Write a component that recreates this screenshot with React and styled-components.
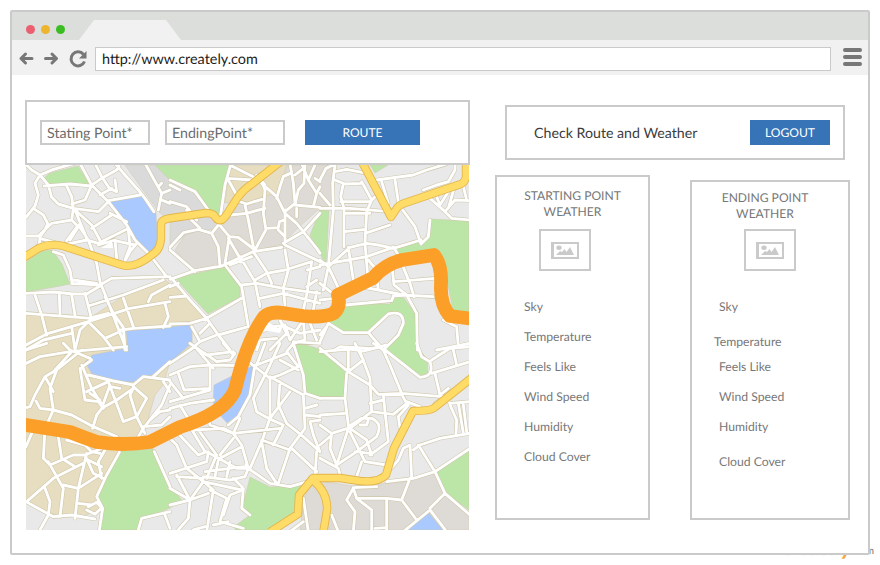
import React from "react";
import styled, { createGlobalStyle } from "styled-components";

const GlobalStyle = createGlobalStyle`
  * { box-sizing: border-box; }
  html, body { margin: 0; background: #fff; }
  body {
    font-family: Lato, "Open Sans", sans-serif;
    text-rendering: geometricPrecision;
    overflow: hidden;
  }
`;

const Page = styled.main`
  position: relative;
  width: 880px;
  height: 565px;
  padding: 10px;
  background: #fff;
`;

const Brand = styled.div`
  position: absolute;
  left: 783px;
  top: 531px;
  display: flex;
  align-items: baseline;
  font-size: 20px;
  line-height: 30px;
  font-weight: 700;
  letter-spacing: -0.4px;
  color: #b9d3ea;
`;

const BrandAccent = styled.span`
  color: #f7a540;
  font-size: 23px;
  font-style: italic;
`;

const BrandSuffix = styled.small`
  position: absolute;
  left: 70px;
  top: 10px;
  font-size: 10px;
  line-height: 20px;
  letter-spacing: 0;
  font-weight: 400;
  color: #777;
`;

const Browser = styled.div`
  position: relative;
  width: 860px;
  height: 545px;
  border: 2px solid #cacaca;
  border-radius: 2px;
  background: #fff;
`;

const TabStrip = styled.header`
  display: flex;
  height: 28px;
  padding: 8px 0 0 13.5px;
  background: #dcdedb;
`;

const Dots = styled.div`
  display: flex;
  gap: 6px;
  padding-top: 5px;
  width: 53.5px;
`;

const Dot = styled.i`
  width: 9px;
  height: 9px;
  border-radius: 50%;
  background: ${(p) => p.$color};
`;

const Tab = styled.div`
  width: 102px;
  height: 20px;
  background: #f1f1f1;
  clip-path: polygon(15px 0, 87px 0, 102px 100%, 0 100%);
`;

const Toolbar = styled.nav`
  display: flex;
  align-items: flex-start;
  height: 35px;
  background: #f1f1f1;
`;

const NavIcons = styled.svg`
  flex: none;
  width: 83px;
  height: 35px;
`;

const Address = styled.div`
  width: 736px;
  height: 24px;
  margin-top: 7px;
  padding-left: 6px;
  border: 1px solid #cacaca;
  background: #fff;
  font-size: 14.4px;
  line-height: 24px;
  color: #1c1c1c;
`;

const Menu = styled.div`
  display: grid;
  gap: 3px;
  margin: 8px 0 0 12px;
`;

const MenuBar = styled.i`
  width: 19px;
  height: 4px;
  border-radius: 2px;
  background: #777;
`;

const Content = styled.div`
  display: flex;
  align-items: flex-start;
  gap: 25px;
  padding: 25px 0 0 13px;
`;

const RoutePanel = styled.section`
  width: 445px;
`;

const SearchForm = styled.div`
  display: flex;
  gap: 15px;
  height: 65px;
  padding: 18px 13px;
  border: 2px solid #cacaca;
`;

const Field = styled.div`
  width: ${(p) => p.$width}px;
  height: 25px;
  padding-left: 5px;
  border: 2px solid #cacaca;
  font-size: 14.2px;
  line-height: 24px;
  color: #6c6c6c;
`;

const Button = styled.button`
  width: ${(p) => p.$width}px;
  height: 25px;
  margin-left: ${(p) => p.$gap || 0}px;
  padding: 0;
  border: 0;
  background: #3673b7;
  color: #fff;
  font: 12.1px/24px Lato, sans-serif;
  text-rendering: geometricPrecision;
`;

const Map = styled.svg`
  display: block;
  width: 443px;
  height: 365px;
  margin-left: 1px;
`;

const WeatherPanel = styled.section`
  width: 355px;
  padding-top: 5px;
`;

const TitleBar = styled.div`
  display: flex;
  align-items: center;
  justify-content: space-between;
  width: 340px;
  height: 55px;
  margin-left: 10px;
  padding: 0 13px 0 27px;
  border: 2px solid #cacaca;
`;

const Title = styled.h1`
  margin: 2px 0 0;
  font-size: 14.2px;
  line-height: 20px;
  font-weight: 400;
  color: #3c3c3c;
`;

const Cards = styled.div`
  display: flex;
  align-items: flex-end;
  gap: 40px;
  margin-top: 15px;
`;

const Card = styled.article`
  width: ${(p) => p.$width}px;
  height: ${(p) => p.$height}px;
  padding-top: ${(p) => p.$top}px;
  border: 2px solid #cacaca;
  color: #777;
`;

const CardTitle = styled.h2`
  width: 130px;
  height: ${(p) => p.$height}px;
  margin: 0 0 0 ${(p) => p.$left}px;
  text-align: center;
  font-size: 12.1px;
  line-height: 16px;
  font-weight: 400;
`;

const Thumb = styled.div`
  display: flex;
  align-items: center;
  justify-content: center;
  width: 52px;
  height: 42px;
  margin: 0 0 28px ${(p) => p.$left}px;
  border: 2px solid #cacaca;
`;

const Reading = styled.div`
  height: ${(p) => p.$step || 30}px;
  padding-left: ${(p) => p.$left}px;
  font-size: 12.2px;
  line-height: 16px;
`;

/* Ground cover, in page units. */
const cover = [
  ["#e7ddc0", "26,313 88,319 122,297 165,280 190,298 205,317 192,325 192,345 170,362 163,385 155,395 145,430 118,455 100,510 80,517 60,517 26,502"],
  ["#dadada", "125,165 156,165 172,180 195,190 220,218 216,229 197,231 184,236 170,249 170,222 158,211"],
  ["#dedad5", "175,250 185,235 198,231 213,232 220,219 242,194 280,178 287,165 335,165 332,210 318,210 300,226 282,244 255,251 222,265 192,270"],
  ["#e7ddc0", "231,165 287,165 278,193 262,197 247,203 225,203 227,187"],
  ["#bce6a7", "155,165 231,165 225,185 220,217 208,208 195,192 170,180"],
  ["#bce6a7", "44,178 50,173 78,166 90,185 70,184 48,186"],
  ["#bce6a7", "26,262 42,251 52,250 62,264 70,284 55,287 26,292"],
  ["#bce6a7", "175,278 225,267 240,287 240,297 208,314 195,300"],
  ["#bce6a7", "320,210 329,211 326,265 319,252 310,235"],
  ["#bce6a7", "370,165 388,165 375,173"],
  ["#bce6a7", "431,219 469,221 469,316 453,311 445,270 435,249 398,255 396,248 427,239"],
  ["#bce6a7", "335,308 360,304 390,304 396,297 404,298 415,313 416,345 427,359 428,373 420,376 400,364 385,347 402,328 402,318 392,311 368,332 343,333 328,323"],
  ["#bce6a7", "295,345 302,344 320,349 346,373 345,397 320,397 307,393 303,375"],
  ["#bce6a7", "469,449 436,471 446,493 469,510"],
  ["#bce6a7", "120,451 153,449 157,458 170,487 182,500 170,508 140,520 138,530 100,530 103,510 98,497"],
  ["#bce6a7", "250,477 270,487 306,485 298,513 270,530 235,530 235,526 250,515 243,505"],
  ["#dedad5", "313,480 353,486 403,482 434,472 446,493 469,513 469,530 300,530 304,498"],
  ["#a9c9ff", "108,201 140,195 150,204 156,213 158,245 149,252 132,235 125,222"],
  ["#a9c9ff", "126,331 170,327 192,324 192,343 175,358 163,368 150,376 142,377 133,382 115,382 92,374 85,362 92,355 127,348 127,341"],
  ["#a9c9ff", "254,365 250,393 238,415 227,423 218,413 213,402 214,385 230,377 248,368"],
  ["#a9c9ff", "428,512 443,530 405,530"],
];

/* Streets, one sheet per sector; coordinates are thirds of a page unit. */
const streets = [
  {
    x: 20, y: 160,
    d: `M20 15 35 30 60 45 45 70 55 105 45 138 18 172M60 45 85 75 95 112 115 132 160 145M60 45 100 28 165 10M180 10 215 75 265 125 320 195 345 240 390 285 440 350
    M72 78 150 72 212 78M140 78 155 110 160 145M155 132 195 120 213 80M215 75 245 55 290 30 300 10M225 10 245 50 268 85 290 95 285 60M240 105 275 85M265 122 360 105
    M285 10 315 45 355 90 375 115 402 155M375 10 400 55 425 100 415 150M425 100 450 90M425 120 450 130M425 70 415 80M160 145 155 180 175 200 150 240M160 145 215 195 245 250M160 145 235 155 265 125M215 205 275 165M270 160 320 185
    M40 145 70 165 83 190 75 210 60 230 58 255M58 225 95 190 155 180M18 228 60 228M60 235 130 255 200 240 235 250 320 208M165 150 200 235M140 242 175 195 205 240
    M205 240 230 310 240 365 270 440 300 520 320 570M235 255 285 240 290 295M285 242 345 255M350 250 330 275 310 312M325 210 330 260 315 300M100 275 130 285 150 330 157 372M100 260 70 250 52 258
    M155 370 240 375 275 355 450 350M240 378 200 402 160 402 100 396 18 400M160 360 230 370M195 400 213 470M45 405 65 465 80 525M118 405 120 462M155 405 165 465M18 460 215 475M80 522 205 485 330 445 450 425M205 438 310 405 430 360M385 425 395 405 450 375M205 485 250 530 280 570M155 500 165 570M18 555 80 522 155 500M205 485 180 510 165 570M18 570 70 540 155 520M255 410 280 460 310 502 315 570M205 475 265 460M310 415 340 500M435 430 445 470 430 502M300 510 340 505 450 498M255 535 310 510`,
  },
  {
    x: 170, y: 160,
    d: `M183 10 165 75 152 165M0 60 75 95 115 150M0 75 30 90M0 125 50 140 80 180M50 150 62 178 90 205M0 262 40 218 85 208 125 220 145 195M125 220 145 260 150 320M145 190 178 230 165 310M178 230 205 232 255 270M175 235 210 295M145 195 180 165 230 160 285 145
    M225 135 235 180 252 270M195 120 230 132 275 118M170 55 250 60M185 18 250 50M175 60 200 105M270 50 285 90 280 160 287 205 325 203 328 185 345 180M275 70 320 110 345 160 380 190 440 265 450 280M320 115 330 80 340 50 365 38 370 70 375 130 345 155M365 40 360 10M405 10 402 70 385 90 375 135 450 142M435 15 415 60 440 100 450 80M415 60 395 10M285 75 260 45M375 45 400 25M435 55 450 65M430 140 440 100
    M345 150 345 245M450 160 400 215 340 250M380 145 380 170M290 205 255 270M325 210 345 230M0 358 75 332 155 318 250 275 335 262M345 255 450 305M0 270 75 335M5 355 60 420 110 475M165 315 215 380 235 500M110 475 215 415M0 412 50 408M0 492 60 490 110 475 145 525 180 570M0 380 25 370
    M215 375 260 370 340 385 450 400M210 290 255 365 270 440M250 275 290 335 305 370M255 360 290 340 345 330 425 305M180 315 245 290M345 270 355 330 340 385 345 435M270 415 340 400 450 430M425 305 412 395 400 450M412 330 450 320M440 395 430 450M440 360 410 380
    M145 525 235 500M65 500 90 545 60 570M120 490 90 520M90 545 140 525M260 520 310 500 345 495 360 540M330 480 350 520 300 570M360 540 400 480 405 540 370 550M420 490 440 540M345 500 390 520 450 510M260 570 270 540 320 535M370 545 450 550`,
  },
  {
    x: 320, y: 160,
    d: `M0 145 90 145 210 155M45 15 38 70 40 150 25 320M0 60 18 25 40 15M0 100 30 135M45 60 75 72 125 70M70 70 62 110 72 145 72 260M45 35 80 28 130 38M62 125 150 125M125 65 155 120 140 155 135 250 145 370M75 160 150 160M75 215 135 208M135 220 210 195M150 125 165 110M185 65 205 130M225 60 235 125
    M170 60 280 45 320 30 380 12M310 90 350 75 385 65 405 30 405 10M330 115 375 155 405 120M350 110 360 135 385 95M375 155 395 175 450 180M405 75 385 145M405 120 450 122M430 80 440 120M330 180 325 230 303 252 285 200 248 150M303 240 220 265 175 255 140 250M25 320 90 262 140 250M85 262 100 360M25 320 60 395M25 320 0 300M0 315 140 290 220 262M25 320 10 390M0 370 50 410M0 420 45 415M220 260 235 285
    M170 350 175 390 250 405 340 410M215 310 222 375 260 405 290 460 292 570M245 310 270 370 282 410M222 365 345 355M75 435 215 422 220 408 260 405M120 380 175 390M25 490 70 518 145 518 205 462Q250 450 250 490L235 525 190 570M145 518 190 570M25 490 0 545M370 480 410 500 415 560M350 570 450 550M145 300 170 330M0 525 20 500M45 570 60 560 150 565`,
  },
  {
    x: 20, y: 345,
    d: `M18 15 80 -5M18 55 60 35 150 20 320 5M130 -5 150 15 210 40M185 15 110 75 90 130 100 195M155 20 100 80 75 95 45 150 30 185 18 188M75 95 100 140M48 168 60 190 100 195 155 210 220 245 290 275M215 45 180 70 195 165 235 170 250 190M185 60 215 130 250 185 230 210 218 250M205 90 280 108 340 120 370 95 450 105
    M200 140 265 110 295 190 310 230 350 215 380 160 340 125M270 120 245 190 290 165 340 130M340 130 330 150 350 215 375 265M450 120 425 180 370 250 355 275M370 245 425 240 450 215M390 225 420 200 450 195M450 50 400 95M430 110 450 140M210 145 240 165M270 125 300 130
    M100 195 75 250 70 340 90 360 160 330 195 330 245 310M18 305 35 265M115 275 125 340M140 285 195 300 215 320 240 325M85 350 110 395 130 430 120 515M20 470 100 400 190 355M200 325 175 430 165 520M130 420 175 430 245 385M195 330 220 385 250 400M255 315 235 350 245 400M205 345 245 365M298 322 260 390 230 455 248 490 238 555M18 470 100 515 155 510 225 522M75 430 90 470 85 510 60 555M175 475 215 480M205 485 230 472 245 488 225 508 200 495M125 340 165 365M403 320 450 425M355 555 365 520 450 500M435 510 450 550`,
  },
  {
    x: 170, y: 345,
    d: `M0 55 75 5 130 70M0 90 60 65 120 60 200 62M60 -5 110 30 190 20M105 25 140 50 180 45 195 25M190 30 160 -5M120 60 120 135 0 170M25 85 42 135 120 130M0 110 40 160M0 190 60 175 130 165M30 180 60 230M110 200 120 240M235 50 300 100M255 60 240 150 205 215 175 240M285 -5 260 60 350 25M330 -5 300 60 250 160M350 20 385 65 330 90 300 100M350 20 370 -5 400 90 405 145 450 160M300 95 400 150M300 100 300 220M330 45 385 75
    M250 160 260 200 295 220 340 240M330 110 325 180 350 235 400 275 450 320M400 150 405 250 360 310 325 415M360 140 300 220 275 290 240 370M75 255 160 250 190 265 330 250M210 220 190 265 215 300 235 370M120 240 190 265M190 280 150 330M20 260 85 330 110 320 200 370 240 370M0 280 20 300 50 370 100 410 215 435M60 245 105 320M85 255 140 330M215 305 150 340
    M0 385 110 350 115 320M140 330 110 400M180 350 170 395M145 345 135 395M100 395 180 405 225 395 235 370M105 380 220 365M235 370 300 415 360 425 430 405M275 285 360 315M275 290 290 370 320 415M340 240 310 300M20 390 60 465 100 410M60 465 0 430M60 465 0 480M60 465 55 520 20 560M60 465 115 445M90 400 130 435 110 560M170 460 120 435M170 460 150 530 220 550M160 510 180 450 220 435M190 400 220 430 215 490 240 510M20 395 100 400M70 555 105 545M130 540 175 530
    M365 310 440 380M440 180 405 190M450 225 420 230 430 270 450 320M440 320 435 390M400 460 415 560M360 560 400 530M405 210 450 215`,
  },
  {
    x: 320, y: 345,
    d: `M0 10 85 80 150 120 175 148 245 145 370 155M0 20 90 12 130 18 200 0M85 15 85 80 130 45 105 -5M120 20 150 100 155 200 90 250M80 85 75 160 85 240M0 160 75 160M0 210 75 205M190 15 210 60 245 145M195 15 300 97Q345 95 330 50L305 35 290 -5M335 45 390 10 450 5M400 15 410 60M335 85 450 50M345 85 360 150 385 130M160 -5 190 15
    M155 200 220 208 260 175 245 148 190 150M150 175 190 165M190 150 195 200 205 290 150 330M260 170 300 185M370 155 390 175 450 170M370 160 345 175M240 250 235 215 265 180M85 245 125 220 155 220Q190 235 170 275L110 320M90 250 140 285 155 330M120 240 140 240 145 225M0 240 35 265 90 248M85 250 50 360M35 265 30 310 50 360 110 320M90 260 135 350 200 360M0 300 35 270M0 340 55 370 60 390M125 350 110 395M105 320 150 325
    M205 380 235 345 250 310 270 300 275 395M295 300 345 380 375 445 330 490M280 315 300 300 360 280 450 265M390 180 410 225 408 270M430 180 440 260M415 175 430 265M200 410 280 400 345 380 450 310M375 445 450 510M100 430 110 460 200 460 245 465 270 400M110 460 155 495 155 560M200 460 200 560M100 430 80 465 105 500 100 560M245 465 290 525M100 428 170 425M250 560 330 495 380 560M35 510 55 560M165 550 200 548`,
  },
];

const orange = "M20 424 L70 432 Q85 438 97 442 Q123 446 150 442 L180 427 Q225 413 235 390 Q247 340 264 317 Q270 311 283 313 L303 316 Q325 318 334 313 Q341 307 338 295 L373 278 Q385 264 402 260 L434 255 Q442 265 441 285 Q440 305 450 316 L474 319";
const yellow = [
  "M20 260 L39 248 Q50 243 63 246 L122 265 Q135 269 153 254 Q160 250 161 239 L161 225 Q161 219 172 218 L206 213 Q214 213 216 218 Q221 224 227 214 L238 197 Q244 189 252 184 L280 162",
  "M362 162 L391 217 L397 208 Q399 205 405 203 L461 184 Q465 182 466 177 L466 160",
  "M474 376 L434 408 Q430 411 413 411 L394 448 L386 475 Q378 483 360 481 L340 478 L313 478 L299 495 L298 514 L270 532",
  "M313 480 Q328 493 327 510 L323 534",
];

function RoadMap() {
  return (
    <Map viewBox="26 165 443 365" fill="none" strokeLinejoin="round">
      <rect x="26" y="165" width="443" height="365" fill="#e9e9ea" />
      {cover.map(([fill, points], i) => (
        <polygon key={i} points={points} fill={fill} stroke="#cfc8ae" strokeWidth=".5" />
      ))}
      {[["#cfc7ab", 12], ["#fff", 8.6]].map(([stroke, width]) => (
        <g key={stroke} stroke={stroke} strokeWidth={width} strokeLinecap="round">
          {streets.map((s) => (
            <path key={`${s.x}-${s.y}`} d={s.d} transform={`translate(${s.x} ${s.y}) scale(.33333)`} />
          ))}
        </g>
      ))}
      <path d="M257 326 269 323 278 328 284 323 280 333 268 331Z M246 462 251 471 243 469Z M101 248 112 241 113 248Z" fill="#fff" />
      <g stroke="#e3b64c" strokeWidth="8.4">{yellow.map((d) => <path key={d} d={d} />)}</g>
      <g stroke="#ffdc68" strokeWidth="6.6">{yellow.map((d) => <path key={d} d={d} />)}</g>
      <path d={orange} stroke="#fb9f28" strokeWidth="13.8" />
    </Map>
  );
}

function PictureIcon() {
  return (
    <svg width="28" height="17" viewBox="0 0 28 17" fill="#cacaca">
      <path fillRule="evenodd" d="M0 0H28V17H0ZM3 2V15H26V2Z" />
      <ellipse cx="8" cy="5.7" rx="2.7" ry="2.2" />
      <path d="M5 13 9 9 11 10 13.5 7 15.5 10 19 5 23 13Z" />
    </svg>
  );
}

export default function App() {
  return (
    <>
      <GlobalStyle />
      <Page>
        <Brand>
          createl<BrandAccent>y</BrandAccent>
          <BrandSuffix>.com</BrandSuffix>
        </Brand>
        <Browser>
          <TabStrip>
            <Dots>
              <Dot $color="#eb6070" />
              <Dot $color="#edb52e" />
              <Dot $color="#3bbd21" />
            </Dots>
            <Tab />
          </TabStrip>
          <Toolbar>
            <NavIcons viewBox="0 0 83 35" fill="none" stroke="#777" strokeWidth="3">
              <path d="M9 18.5H20M13.5 14 9 18.5 13.5 23M33.500 18.500H44.500M40 14 44.500 18.500 40 23" strokeLinecap="round" strokeLinejoin="round" />
              <path d="M71.500 14.500A7 7 0 1 0 72.500 21.500" />
              <path d="M74.500 11V18.500H67Z" fill="#777" stroke="none" />
            </NavIcons>
            <Address>http://www.creately.com</Address>
            <Menu><MenuBar /><MenuBar /><MenuBar /></Menu>
          </Toolbar>
          <Content>
            <RoutePanel>
              <SearchForm>
                <Field $width={110}>Stating Point*</Field>
                <Field $width={120}>EndingPoint*</Field>
                <Button $width={115} $gap={5}>ROUTE</Button>
              </SearchForm>
              <RoadMap />
            </RoutePanel>
            <WeatherPanel>
              <TitleBar>
                <Title>Check Route and Weather</Title>
                <Button $width={80}>LOGOUT</Button>
              </TitleBar>
              <Cards>
                <Card $width={155} $height={345} $top={11}>
                  <CardTitle $left={10.500} $height={41}>STARTING POINT<br />WEATHER</CardTitle>
                  <Thumb $left={42}><PictureIcon /></Thumb>
                  <Reading $left={27}>Sky</Reading>
                  <Reading $left={27}>Temperature</Reading>
                  <Reading $left={27}>Feels Like</Reading>
                  <Reading $left={27}>Wind Speed</Reading>
                  <Reading $left={27}>Humidity</Reading>
                  <Reading $left={27}>Cloud Cover</Reading>
                </Card>
                <Card $width={160} $height={340} $top={8}>
                  <CardTitle $left={8} $height={39}>ENDING POINT<br />WEATHER</CardTitle>
                  <Thumb $left={52}><PictureIcon /></Thumb>
                  <Reading $left={27} $step={35}>Sky</Reading>
                  <Reading $left={22} $step={25}>Temperature</Reading>
                  <Reading $left={27}>Feels Like</Reading>
                  <Reading $left={27}>Wind Speed</Reading>
                  <Reading $left={27} $step={35}>Humidity</Reading>
                  <Reading $left={27}>Cloud Cover</Reading>
                </Card>
              </Cards>
            </WeatherPanel>
          </Content>
        </Browser>
      </Page>
    </>
  );
}
